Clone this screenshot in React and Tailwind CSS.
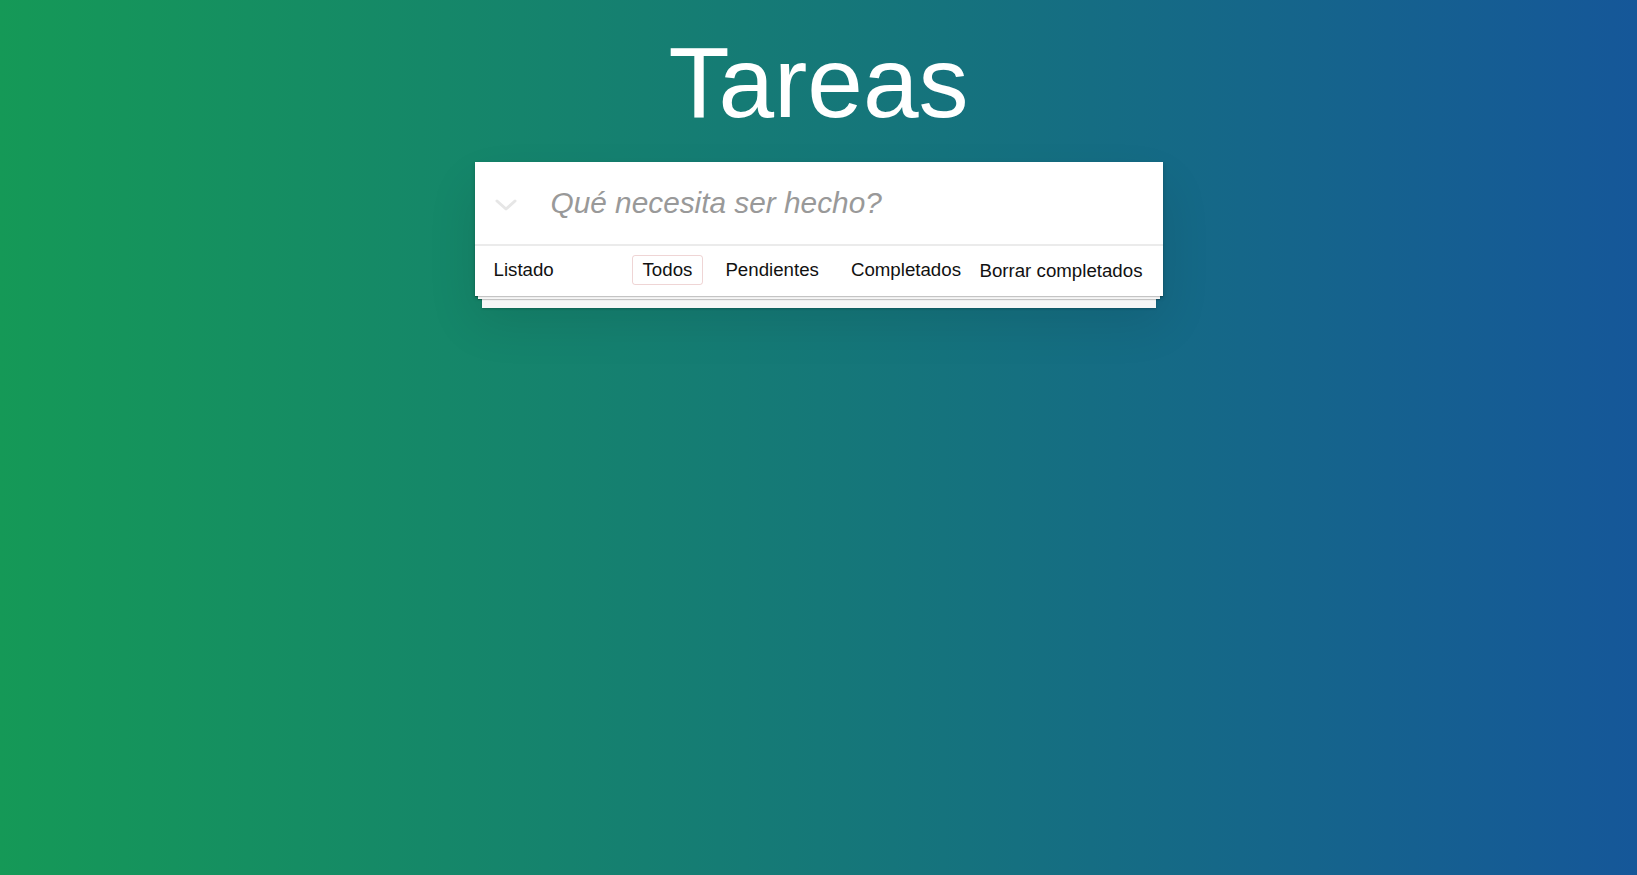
import React from "react";

export default function App() {
  return (
    <div
      className="min-h-screen w-full flex flex-col items-center bg-[linear-gradient(to_right,#159957,#155799)] text-[#111]"
      style={{ fontFamily: '"Liberation Sans", Arial, sans-serif' }}
    >
      <h1 className="mt-[32px] text-[100px] leading-[100px] font-normal text-white">Tareas</h1>
      <section className="mt-[30px] w-[688px] bg-white shadow-[0_2px_4px_rgba(0,0,0,0.2),0_25px_50px_rgba(0,0,0,0.1)]">
        <div className="relative flex items-center h-[82px]">
          <div className="absolute left-[20px] top-[37px] w-[22px] h-[12px]">
            <svg width="22" height="12" viewBox="0 0 22 12" fill="none">
              <polyline points="2,2 11,10 20,2" stroke="#e6e6e6" strokeWidth="3" strokeLinecap="round" strokeLinejoin="round" />
            </svg>
          </div>
          <input
            className="w-full h-full pl-[76px] pr-4 text-[29.8px] italic text-[#4d4d4d] placeholder:text-[#999] placeholder:italic outline-none bg-transparent"
            placeholder="Qué necesita ser hecho?"
          />
        </div>
        <footer className="relative flex items-center h-[52px] pb-[2px] border-t-2 border-[#ebebeb] text-[18.7px] shadow-[0_1px_1px_rgba(0,0,0,0.2),0_6px_0_-3px_#f6f6f6,0_7px_1px_-3px_rgba(0,0,0,0.2),0_19px_0_-7px_#f6f6f6,0_20px_2px_-7px_rgba(0,0,0,0.2)] bg-white">
          <div className="w-[157px] pl-[19px] shrink-0">Listado</div>
          <div className="flex items-center">
            <a className="px-[10px] h-[30px] flex items-center border border-[rgba(175,47,47,0.2)] rounded-[3px]">Todos</a>
            <a className="ml-[11px] px-[10px] h-[30px] flex items-center border border-transparent rounded-[3px]">Pendientes</a>
            <a className="ml-[10px] px-[10px] h-[30px] flex items-center border border-transparent rounded-[3px]">Completados</a>
          </div>
          <button className="ml-auto mt-[2px] pr-[20px] text-[18.7px] leading-none">Borrar completados</button>
        </footer>
      </section>
    </div>
  );
}
